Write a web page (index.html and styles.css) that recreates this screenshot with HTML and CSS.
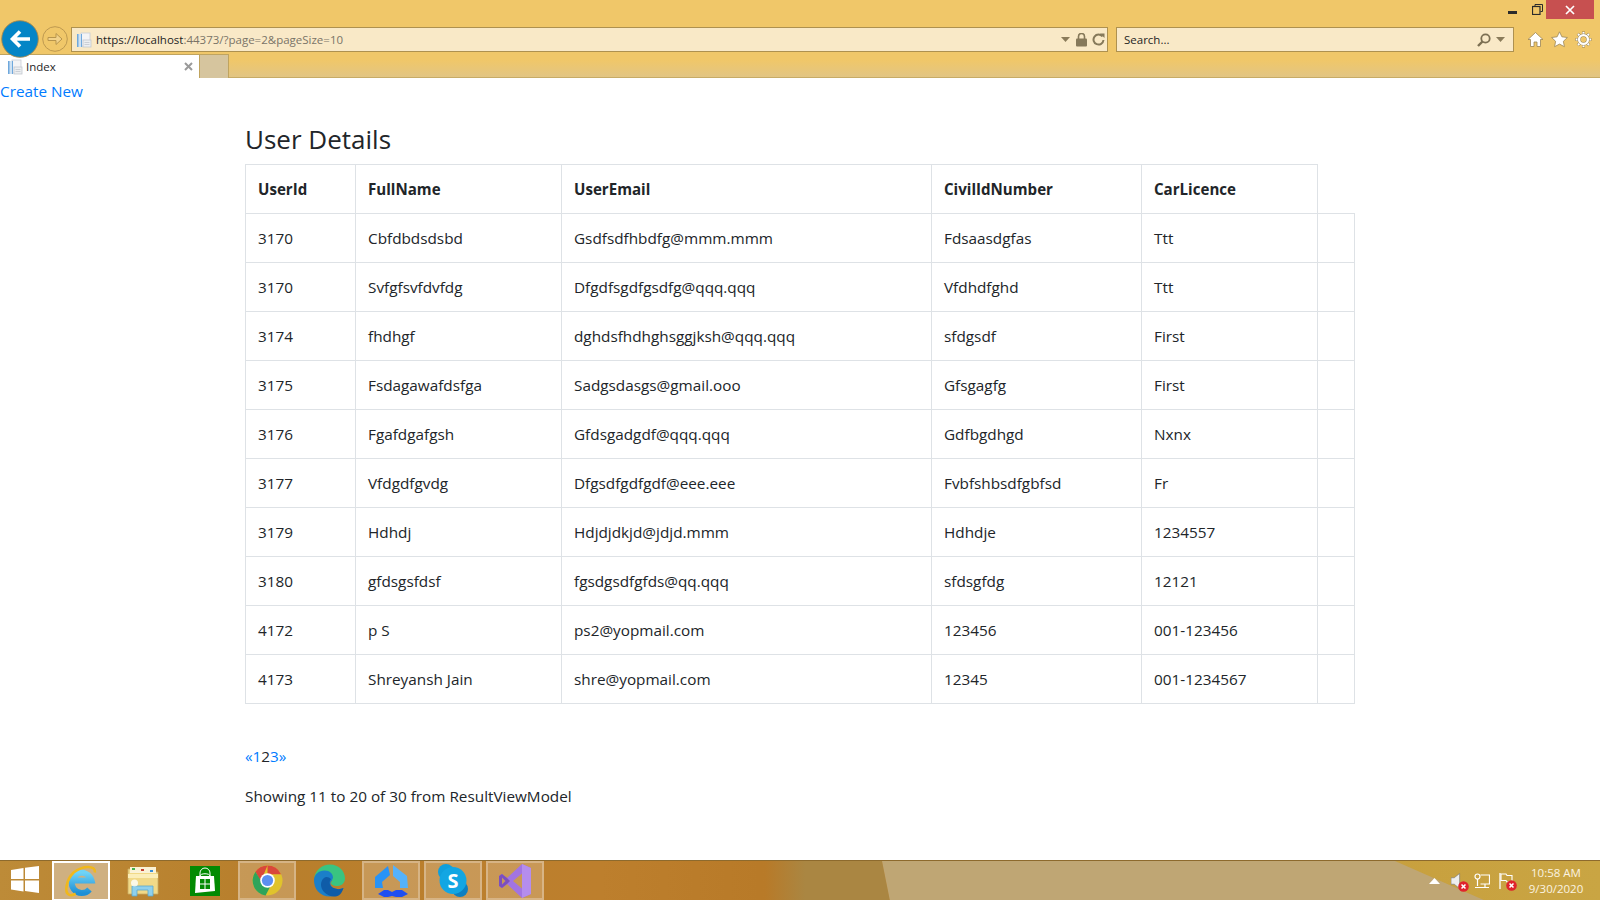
FILE: index.html
```html
<!DOCTYPE html>
<html lang="en">
<head>
<meta charset="utf-8">
<title>Index</title>
<link rel="stylesheet" href="styles.css">
</head>
<body>
<svg class="defs" width="0" height="0" aria-hidden="true">
  <defs>
    <linearGradient id="ieblue" x1="0" y1="0" x2="0" y2="1"><stop offset="0" stop-color="#6fd3f7"/><stop offset="1" stop-color="#1d8fd6"/></linearGradient>
  </defs>
  <symbol id="page" viewBox="0 0 16 16">
    <rect x="5" y="1" width="9" height="13" fill="#f4f4f6" stroke="#c9cdd6" stroke-width=".8"/>
    <rect x="1" y="2" width="5" height="13" fill="#6fa8dc"/>
    <rect x="2.500" y="2" width="2.500" height="13" fill="#cfe2f3"/>
    <rect x="7" y="8" width="8" height="7" fill="#eceef1" stroke="#c3c7cf" stroke-width=".8"/>
    <path d="M8.500 10.500h5M8.500 12.500h5" stroke="#c3c7cf" stroke-width=".8"/>
  </symbol>
  <symbol id="xbadge" viewBox="0 0 10 10">
    <circle cx="5" cy="5" r="4.800" fill="#e0242c"/>
    <path d="M3.200 3.200l3.600 3.600M6.800 3.200l-3.600 3.600" stroke="#fff" stroke-width="1.400"/>
  </symbol>
</svg>

<header class="browser">
  <div class="titlebar">
    <svg class="win-min" width="9" height="3" viewBox="0 0 9 3"><rect width="9" height="3" fill="#2b2b2b"/></svg>
    <svg class="win-restore" width="11" height="11" viewBox="0 0 11 11"><path d="M3 2.500V.5h7.500v7H8.500" fill="none" stroke="#2b2b2b"/><rect x=".5" y="2.500" width="7.500" height="8" fill="none" stroke="#2b2b2b" stroke-width="1.200"/></svg>
    <div class="win-close"><svg width="10" height="10" viewBox="0 0 10 10"><path d="M1 1l8 8M9 1l-8 8" stroke="#fff" stroke-width="1.700"/></svg></div>
  </div>

  <svg class="back" width="38" height="38" viewBox="0 0 38 38"><circle cx="19" cy="19" r="18.300" fill="#0485c6" stroke="#ad8a48" stroke-width=".9"/><path d="M29 19H12M19 11.500L11.500 19l7.500 7.500" fill="none" stroke="#fff" stroke-width="3.600"/></svg>

  <div class="navbar">
    <svg class="forward" width="26" height="26" viewBox="0 0 26 26"><circle cx="13" cy="13" r="12.300" fill="none" stroke="#bd9950" stroke-width="1"/><path d="M6 11.500h8V7.500l6 5.500-6 5.500v-4H6z" fill="#f2d28a" stroke="#b8954c"/></svg>
    <div class="addressbar">
      <svg class="pageicon" width="16" height="16"><use href="#page"/></svg>
      <span class="url"><span class="url-host">https://localhost</span>:44373/?page=2&amp;pageSize=10</span>
      <svg class="caret" width="9" height="5" viewBox="0 0 9 5"><path d="M0 0h9L4.500 5z" fill="#8a7b5a"/></svg>
      <svg class="addr-icon" width="11" height="14" viewBox="0 0 11 14"><path d="M2.500 6V3.500a3 3 0 0 1 6 0V6" fill="none" stroke="#86795a" stroke-width="1.600"/><rect y="5.500" width="11" height="8" rx="1" fill="#86795a"/></svg>
      <svg class="addr-icon" width="13" height="13" viewBox="0 0 13 13"><path d="M10.500 3.500A5 5 0 1 0 11.500 7" fill="none" stroke="#86795a" stroke-width="2"/><path d="M8 0.500l4.500 0v4.500z" fill="#86795a"/></svg>
    </div>
    <div class="searchbar">
      <span class="search-text">Search...</span>
      <svg class="search-icon" width="14" height="14" viewBox="0 0 14 14"><circle cx="8.500" cy="5.500" r="4.200" fill="none" stroke="#7c6f52" stroke-width="1.800"/><path d="M5.500 8.500L1 13" stroke="#7c6f52" stroke-width="2.400"/></svg>
      <svg class="caret" width="9" height="5" viewBox="0 0 9 5"><path d="M0 0h9L4.500 5z" fill="#8a7b5a"/></svg>
    </div>
    <div class="tools">
      <svg width="17" height="17" viewBox="0 0 17 17"><path d="M8.500 1.500L1 8.500h2.500v7h3.500v-4.500h3v4.500h3.500v-7H16z" fill="#fff" stroke="#9a8556" stroke-width=".8"/></svg>
      <svg width="17" height="17" viewBox="0 0 17 17"><path d="M8.500 .8l2.400 5 5.500.7-4 3.800 1 5.400-4.900-2.600-4.900 2.600 1-5.400-4-3.800 5.500-.7z" fill="#fff" stroke="#9a8556" stroke-width=".8"/></svg>
      <svg width="17" height="17" viewBox="0 0 17 17"><path d="M8.500 .5v3M8.500 13.500v3M.5 8.500h3M13.500 8.500h3M2.800 2.800l2.200 2.200M12 12l2.200 2.200M14.200 2.800L12 5M5 12l-2.200 2.200" stroke="#9a8556" stroke-width="3"/><path d="M8.500 .9v3M8.500 13.100v3M.9 8.500h3M13.100 8.500h3M3 3l2 2M12 12l2 2M14 3l-2 2M5 12l-2 2" stroke="#fff" stroke-width="2"/><circle cx="8.500" cy="8.500" r="4.400" fill="none" stroke="#9a8556" stroke-width="3.400"/><circle cx="8.500" cy="8.500" r="4.400" fill="none" stroke="#fff" stroke-width="2.400"/></svg>
    </div>
  </div>

  <div class="tabstrip">
    <div class="tab">
      <svg class="pageicon" width="16" height="16"><use href="#page"/></svg>
      <span class="tab-title">Index</span>
      <svg class="tab-close" width="9" height="9" viewBox="0 0 9 9"><path d="M1 1l7 7M8 1L1 8" stroke="#9a9a9a" stroke-width="2"/></svg>
    </div>
    <div class="newtab"></div>
  </div>
</header>

<main class="page">
  <a class="create" href="#">Create New</a>
  <section class="content">
    <h3 class="heading">User Details</h3>
    <table class="users">
      <colgroup>
        <col class="c1"><col class="c2"><col class="c3"><col class="c4"><col class="c5"><col class="c6">
      </colgroup>
      <thead>
        <tr><th>UserId</th><th>FullName</th><th>UserEmail</th><th>CivilIdNumber</th><th>CarLicence</th></tr>
      </thead>
      <tbody>
        <tr><td>3170</td><td>Cbfdbdsdsbd</td><td>Gsdfsdfhbdfg@mmm.mmm</td><td>Fdsaasdgfas</td><td>Ttt</td><td></td></tr>
        <tr><td>3170</td><td>Svfgfsvfdvfdg</td><td>Dfgdfsgdfgsdfg@qqq.qqq</td><td>Vfdhdfghd</td><td>Ttt</td><td></td></tr>
        <tr><td>3174</td><td>fhdhgf</td><td>dghdsfhdhghsggjksh@qqq.qqq</td><td>sfdgsdf</td><td>First</td><td></td></tr>
        <tr><td>3175</td><td>Fsdagawafdsfga</td><td>Sadgsdasgs@gmail.ooo</td><td>Gfsgagfg</td><td>First</td><td></td></tr>
        <tr><td>3176</td><td>Fgafdgafgsh</td><td>Gfdsgadgdf@qqq.qqq</td><td>Gdfbgdhgd</td><td>Nxnx</td><td></td></tr>
        <tr><td>3177</td><td>Vfdgdfgvdg</td><td>Dfgsdfgdfgdf@eee.eee</td><td>Fvbfshbsdfgbfsd</td><td>Fr</td><td></td></tr>
        <tr><td>3179</td><td>Hdhdj</td><td>Hdjdjdkjd@jdjd.mmm</td><td>Hdhdje</td><td>1234557</td><td></td></tr>
        <tr><td>3180</td><td>gfdsgsfdsf</td><td>fgsdgsdfgfds@qq.qqq</td><td>sfdsgfdg</td><td>12121</td><td></td></tr>
        <tr><td>4172</td><td>p S</td><td>ps2@yopmail.com</td><td>123456</td><td>001-123456</td><td></td></tr>
        <tr><td>4173</td><td>Shreyansh Jain</td><td>shre@yopmail.com</td><td>12345</td><td>001-1234567</td><td></td></tr>
      </tbody>
    </table>
    <nav class="pager"><a href="#">«</a><a href="#">1</a><span>2</span><a href="#">3</a><a href="#">»</a></nav>
    <p class="summary">Showing 11 to 20 of 30 from ResultViewModel</p>
  </section>
</main>

<footer class="taskbar">
  <div class="taskbar-shade"></div>
  <div class="taskbar-light"></div>
  <div class="start">
    <svg width="28" height="27" viewBox="0 0 28 27"><path d="M0 4l12.500-2v11H0zM14 1.700L28 0v13H14zM0 14.500h12.500v11L0 23.500zM14 14.500h14V27l-14-2z" fill="#fff"/></svg>
  </div>
  <div class="tasks">
    <div class="task task-active">
      <svg width="34" height="34" viewBox="0 0 32 32">
        <path d="M7 15.500h19A9.500 9.500 0 1 0 24 24" fill="none" stroke="url(#ieblue)" stroke-width="5.500"/>
        <path d="M29 8C30 1 18 1 9 8 2 15 0 27 5 29c2 1 4 0 6-1" fill="none" stroke="#f0b81c" stroke-width="2.400"/>
      </svg>
    </div>
    <div class="task">
      <svg width="32" height="32" viewBox="0 0 32 32">
        <path d="M1 4h12l2 3h16v22H1z" fill="#f1d987" stroke="#c9ab62" stroke-width=".8"/>
        <rect x="3" y="2" width="26" height="6" fill="#faf2d6"/>
        <rect x="5" y="3" width="3" height="2" fill="#3fb34f"/><rect x="14" y="4" width="3" height="2" fill="#c8402f"/><rect x="23" y="5" width="3" height="2" fill="#3a8fd6"/>
        <path d="M1 9h30v4H1z" fill="#fbeeb9"/>
        <path d="M5 31V21h21v10h-5v-6H10v6z" fill="#8fd0ec" stroke="#5aa7cc" stroke-width=".8"/>
        <circle cx="7.500" cy="18" r="3.500" fill="#fff" opacity=".8"/>
      </svg>
    </div>
    <div class="task">
      <svg width="30" height="30" viewBox="0 0 30 30">
        <rect width="30" height="30" fill="#038a03"/>
        <path d="M6 10h18l1 15-20 2z" fill="#fff"/>
        <path d="M10 14V7a5 5 0 0 1 10 0v7M10 10c0-3 10-3 10 0" fill="none" stroke="#fff" stroke-width="1"/>
        <path d="M10 13h4.500v4.500H10zM15.500 13H20v4.500h-4.500zM10 18.500h4.500V23H10zM15.500 18.500H20V23h-4.500z" fill="#038a03"/>
      </svg>
    </div>
    <div class="task task-open">
      <svg width="31" height="31" viewBox="0 0 32 32">
        <circle cx="16" cy="16" r="15.500" fill="#e0c32c"/>
        <path d="M16 .5A15.500 15.500 0 0 1 30 9.500H16z" fill="#d9483b"/>
        <path d="M16 .5A15.500 15.500 0 0 0 3.500 7L9 17z" fill="#d9483b"/>
        <path d="M3.500 7A15.500 15.500 0 0 0 14 31.400L19 22 11 19z" fill="#2fa45a"/>
        <circle cx="16" cy="16" r="7.500" fill="#fff"/>
        <circle cx="16" cy="16" r="5.800" fill="#5c8ff0"/>
      </svg>
    </div>
    <div class="task">
      <svg width="33" height="33" viewBox="0 0 33 33">
        <path d="M1 15C2 6 9 .5 17 .5c9 0 15 6.500 15 14 0 5-4 7.500-8 7.500-3 0-6-1-6-3 0-1 1-1.500 1-3.500 0-4-4-7-8-7-5 0-9.500 3-10 6.500z" fill="#39c481"/>
        <path d="M1 15c1-5 5-8.500 10.500-8.500S20 10 20 13.500c0 1.200-1 1.800-1 3-2.500 2-2 5.500 1.500 7.500 3 1.500 7 1.500 10 0C28 29.500 22.500 32.500 17 32.500 7 32.500 .5 25 1 15z" fill="#1b7fc9"/>
        <path d="M11 14c-4 3-4 10 0 14 3 3 7 4.500 10 4.500 4 0 7-1 9.500-8.500-3 1.500-7 1.500-10 0-4-2-5-6-2.500-9-2-2-5-3-7-1z" fill="#0f5ca8"/>
      </svg>
    </div>
    <div class="task task-open">
      <svg width="33" height="33" viewBox="0 0 33 33">
        <path d="M0 13L13 2l2 9-8 7 1 6H0z" fill="#2993f5"/>
        <path d="M18 1l14 11 1 12h-8v-6l-7-6z" fill="#55b2fb"/>
        <path d="M3 30l6-4h4l4 2 4-2h6l6 4-6 3h-6l-4-1-4 1H9z" fill="#1f4ff0"/>
      </svg>
    </div>
    <div class="task task-open">
      <svg width="30" height="33" viewBox="0 0 30 33">
        <circle cx="8" cy="8" r="8" fill="#0f9fdc"/><circle cx="22" cy="25" r="8" fill="#0c7fc2"/>
        <circle cx="15" cy="16.500" r="13.500" fill="#12a6e3"/>
        <text class="skype-s" x="15" y="23.500" text-anchor="middle">S</text>
      </svg>
    </div>
    <div class="task task-open">
      <svg width="32" height="36" viewBox="0 0 32 36">
        <path fill-rule="evenodd" d="M23 1l9 4v26l-9 4L8 21l-5 4-3-2V13l3-2 5 4zM3 14.500v7l3.500-3.500zM23 10.500l-9 7.500 9 7.500z" fill="#a274e2"/>
        <path d="M23 1l9 4v26l-9 4V25.500 10.500z" fill="#b58ded"/>
        <path fill-rule="evenodd" d="M0 13l3-2 5 4 3 3-3 3-5 4-3-2zM3 14.500v7l3.500-3.500z" fill="#7c4fbe"/>
      </svg>
    </div>
  </div>
  <div class="tray">
    <svg class="tray-up" width="11" height="6" viewBox="0 0 11 6"><path d="M0 6h11L5.500 0z" fill="#fff"/></svg>
    <div class="tray-icon">
      <svg width="14" height="18" viewBox="0 0 13 16"><path d="M0 5h3l5-4v14l-5-4H0z" fill="#eee" stroke="#777" stroke-width=".6"/></svg>
      <svg class="badge" width="11" height="11"><use href="#xbadge"/></svg>
    </div>
    <div class="tray-icon">
      <svg width="16" height="16" viewBox="0 0 16 16"><circle cx="3.500" cy="3.500" r="2.500" fill="none" stroke="#fff" stroke-width="1.200"/><path d="M3.500 6v7M1 14.500h14M6.500 2h9v9h-9M11 11v3" fill="none" stroke="#fff" stroke-width="1.200"/></svg>
    </div>
    <div class="tray-icon">
      <svg width="14" height="16" viewBox="0 0 14 16"><path d="M1 0v16" stroke="#fff" stroke-width="1.300"/><path d="M2 1h5l1 1.500h5V9H8L7 7.500H2z" fill="none" stroke="#fff" stroke-width="1.100"/></svg>
      <svg class="badge" width="11" height="11"><use href="#xbadge"/></svg>
    </div>
    <div class="clock"><span>10:58 AM</span><span>9/30/2020</span></div>
  </div>
</footer>
</body>
</html>
```

FILE: styles.css
```css
* { box-sizing: border-box; }
html, body { margin: 0; padding: 0; }
body {
  width: 1600px;
  height: 900px;
  display: flex;
  flex-direction: column;
  overflow: hidden;
  background: #fff;
  color: #212529;
  font-family: "Open Sans", "Noto Sans", sans-serif;
  font-size: 15.3px;
  line-height: 24px;
}
.defs { position: absolute; }
a { color: #007bff; text-decoration: none; }

/* browser chrome */
.browser {
  position: relative;
  flex: none;
  height: 78px;
  background: linear-gradient(#f0c769 0, #f0c769 60px, #e2c583 77px);
  border-bottom: 1px solid #c7ab66;
}
.titlebar { height: 27px; display: flex; align-items: flex-start; position: relative; }
.win-min { margin-left: 1508px; margin-top: 11px; }
.win-restore { margin-left: 15px; margin-top: 4px; }
.win-close {
  margin-left: 3px;
  width: 48px;
  height: 19px;
  background: #c75050;
  display: flex;
  align-items: center;
  justify-content: center;
}
.back { position: absolute; left: 1px; top: 20px; z-index: 2; }
.navbar { height: 25px; display: flex; align-items: stretch; padding-left: 42px; }
.forward { margin-top: -1px; flex: none; }
.addressbar, .searchbar {
  display: flex;
  align-items: center;
  background: #f9e9c7;
  border: 1px solid #ae914f;
  font-size: 11.5px;
  color: #7a7467;
}
.addressbar { margin-left: 3px; width: 1037px; padding: 0 2px 0 4px; }
.pageicon { flex: none; }
.url { margin-left: 4px; flex: 1; line-height: 23px; }
.url-host { color: #1f1f1f; }
.caret { flex: none; }
.addr-icon { flex: none; margin-left: 6px; }
.addr-icon + .addr-icon { margin-left: 5px; }
.searchbar { margin-left: 8px; width: 398px; padding: 0 8px 0 7px; }
.search-text { flex: 1; color: #1f1f1f; line-height: 23px; }
.search-icon { margin-right: 5px; }
.tools { display: flex; align-items: center; gap: 7px; margin-left: 13px; }
.tabstrip { display: flex; height: 24px; margin-top: 2px; }
.tab {
  width: 200px;
  height: 24px;
  background: #fff;
  border: 1px solid #c0a45f;
  border-left: none;
  border-bottom: none;
  display: flex;
  align-items: center;
  padding: 0 6px 0 7px;
  font-size: 11.5px;
}
.tab-title { flex: 1; margin-left: 3px; color: #1f1f1f; }
.tab-close { flex: none; }
.newtab {
  width: 29px;
  height: 24px;
  background: #d6c59e;
  border: 1px solid #c0a45f;
  border-left: none;
  border-bottom: none;
}

/* page */
.page { flex: 1; min-height: 0; }
.create { display: block; padding-top: 1px; line-height: 24px; height: 26px; }
.content { padding: 18px 0 0 245px; }
.heading {
  margin: 0 0 8px;
  font-size: 26px;
  font-weight: 400;
  line-height: 34px;
  color: #212529;
}
.users {
  border-collapse: collapse;
  table-layout: fixed;
  width: 1109px;
}
.c1 { width: 110px; }
.c2 { width: 206px; }
.c3 { width: 370px; }
.c4 { width: 210px; }
.c5 { width: 176px; }
.c6 { width: 37px; }
.users th, .users td {
  border: 1px solid #dee2e6;
  padding: 12px;
  height: 49px;
  text-align: left;
  vertical-align: top;
  white-space: nowrap;
}
.users th { font-weight: 700; font-size: 15.1px; }
.pager { margin-top: 40px; height: 24px; }
.summary { margin: 16px 0 0; }

/* taskbar */
.taskbar {
  position: relative;
  flex: none;
  height: 40px;
  display: flex;
  background: linear-gradient(90deg, #bd8b38 0, #b87f2c 250px, #bd7f2d 600px, #b87a28 760px, #c8a03e 1390px, #c9a543 1600px);
  border-top: 1px solid #8d6a2d;
}
.taskbar-shade {
  position: absolute;
  inset: 0;
  background: linear-gradient(90deg, #b87a28 765px, #aa8642 805px);
  clip-path: polygon(765px 0, 882px 0, 890px 40px, 765px 40px);
}
.taskbar-light {
  position: absolute;
  inset: 0;
  background: #bfa674;
  clip-path: polygon(882px 0, 1395px 0, 1486px 40px, 890px 40px);
}
.start { position: relative; width: 52px; padding: 5px 0 0 11px; flex: none; }
.tasks { position: relative; display: flex; gap: 4px; }
.task {
  width: 58px;
  height: 39px;
  display: flex;
  align-items: center;
  justify-content: center;
  border: 2px solid transparent;
}
.task-active { background: #cfb081; border-color: #fff; border-bottom-width: 1px; }
.task-open { background: rgba(255,255,255,.2); border-color: rgba(255,255,255,.28); }
.skype-s { font-family: "Open Sans", sans-serif; font-size: 20px; font-weight: 700; fill: #fff; }
.tray {
  position: relative;
  margin-left: auto;
  display: flex;
  align-items: center;
  color: #fff;
}
.tray-up { margin-right: 6px; }
.tray-icon { position: relative; width: 24px; display: flex; justify-content: center; }
.badge { position: absolute; right: 1px; bottom: -2px; }
.clock {
  display: flex;
  flex-direction: column;
  align-items: center;
  width: 76px;
  margin-right: 6px;
  font-size: 11.5px;
  line-height: 16px;
  color: #fbf3e0;
}
```
